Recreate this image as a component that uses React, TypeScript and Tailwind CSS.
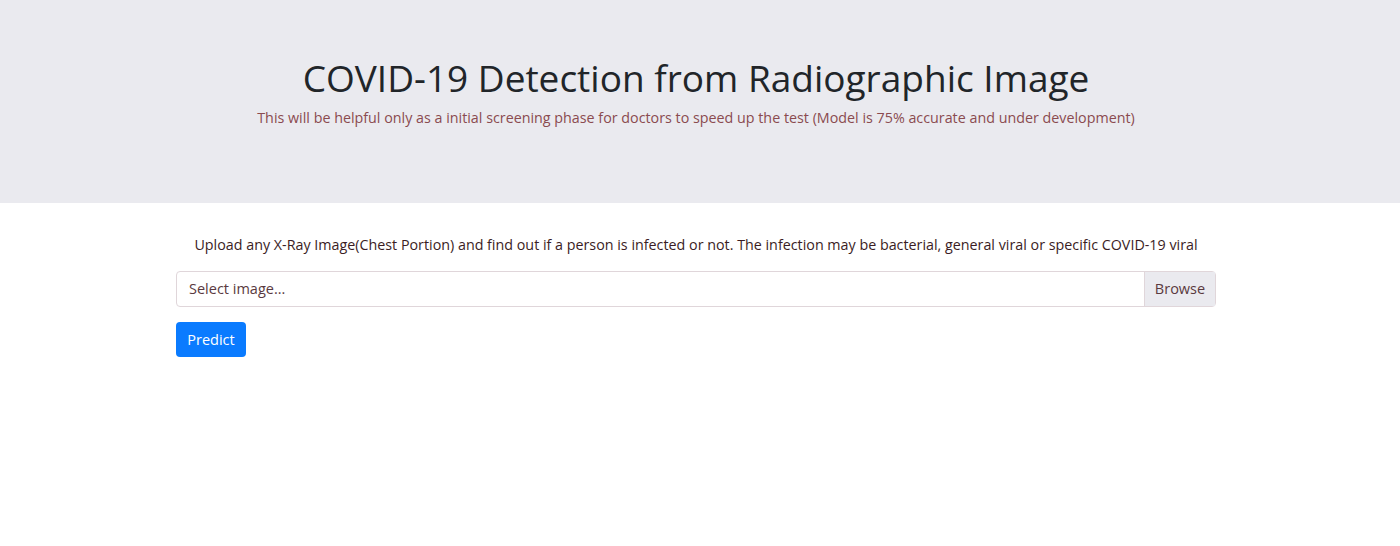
export default function App() {
  return (
    <div className="min-h-[546px] w-full bg-white font-['Open_Sans',sans-serif]">
      {/* jumbotron */}
      <div className="h-[203px] w-full bg-[#eaeaef]">
        <div className="w-[1392px] pt-[54px] text-center">
          <h1 className="text-[37px] leading-[48px] text-[#212529]">COVID-19 Detection from Radiographic Image</h1>
          <p className="mt-[4px] text-[14.3px] leading-[24px] text-[#8a4b4f]">
            This will be helpful only as a initial screening phase for doctors to speed up the test (Model is 75% accurate and under development)
          </p>
        </div>
      </div>

      <div className="w-[1392px]">
        <div className="mx-auto w-[1040px] pt-[30px]">
          <p className="text-center text-[14.3px] leading-[24px] text-[#3b1d24]">
            Upload any X-Ray Image(Chest Portion) and find out if a person is infected or not. The infection may be bacterial, general viral or specific COVID-19 viral
          </p>

          <div className="mt-[14px] flex h-[36px] rounded-[4px] border border-[#e0d6da] bg-white">
            <div className="flex flex-1 items-center px-[12px] text-[14.5px] text-[#5a3a40]">Select image...</div>
            <div className="flex w-[71px] items-center justify-center border-l border-[#e0d6da] bg-[#eaeaef] text-[14.5px] text-[#5a3a40]">Browse</div>
          </div>

          <button className="mt-[15px] h-[35px] w-[70px] rounded-[4px] bg-[#0a7bff] text-[14.5px] text-white">Predict</button>
        </div>
      </div>
    </div>
  );
}
